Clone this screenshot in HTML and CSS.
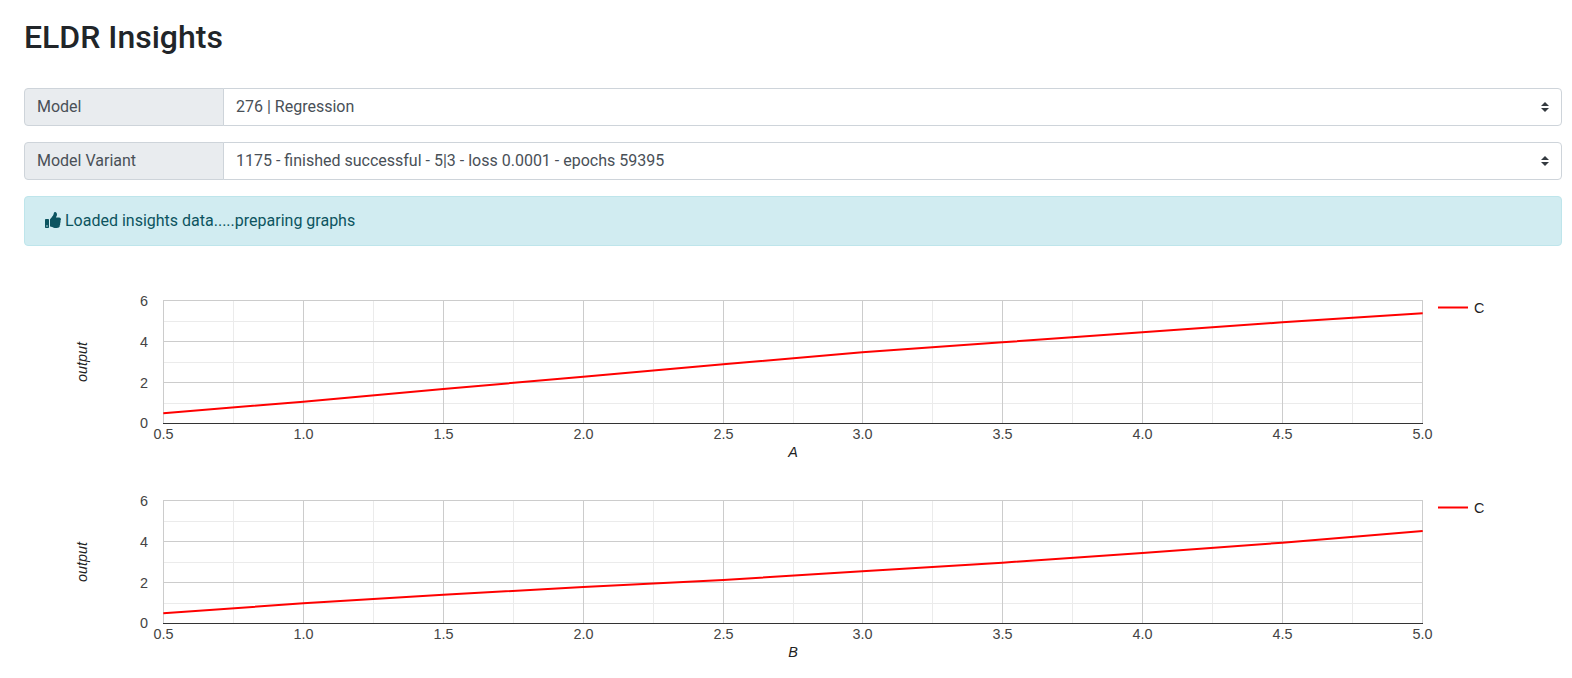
FILE: index.html
```html
<!DOCTYPE html>
<html lang="en">
<head>
    <meta charset="UTF-8">
    <title>ELDR Insights</title>
    <link rel="stylesheet" href="styles.css">
</head>
<body>
<div class="page">
    <h2 class="page-title">ELDR Insights</h2>

    <div class="input-group">
        <label class="input-label" for="model">Model</label>
        <select class="input-select" id="model">
            <option>276 | Regression</option>
        </select>
    </div>
    <div class="input-group">
        <label class="input-label" for="variant">Model Variant</label>
        <select class="input-select" id="variant">
            <option>1175 - finished successful - 5|3 - loss 0.0001 - epochs 59395</option>
        </select>
    </div>

    <div class="alert">
        <svg class="alert-icon" viewBox="0 0 512 512"><path d="M104 224H24c-13.255 0-24 10.745-24 24v240c0 13.255 10.745 24 24 24h80c13.255 0 24-10.745 24-24V248c0-13.255-10.745-24-24-24zM64 472c-13.255 0-24-10.745-24-24s10.745-24 24-24 24 10.745 24 24-10.745 24-24 24zM384 81.452c0 42.416-25.97 66.208-33.277 94.548h101.723c33.397 0 59.397 27.746 59.553 58.098.084 17.938-7.546 37.249-19.439 49.197l-.11.11c9.836 23.337 8.237 56.037-9.308 79.469 8.681 25.895-.069 57.704-16.382 74.757 4.298 17.598 2.244 32.575-6.148 44.632C440.202 511.587 389.616 512 346.839 512l-2.845-.001c-48.287-.017-87.806-17.598-119.56-31.725-15.957-7.099-36.821-15.887-52.651-16.178-6.54-.12-11.783-5.457-11.783-11.998v-213.77c0-3.2 1.282-6.271 3.558-8.521 39.614-39.144 56.648-80.587 89.117-113.111 14.804-14.832 20.188-37.236 25.393-58.902C282.515 39.293 291.817 0 312 0c24 0 72 8 72 81.452z"/></svg>
        Loaded insights data.....preparing graphs
    </div>

    <div class="charts">
        <svg class="chart" viewBox="0 0 1538 190">
            <path class="grid-minor" d="M209.5 20V143M349.5 20V143M489.5 20V143M629.5 20V143M769.5 20V143M908.5 20V143M1048.5 20V143M1188.5 20V143M1328.5 20V143M139 41.5H1399M139 82.5H1399M139 123.5H1399"/>
            <path class="grid-major" d="M139.5 20V143M279.5 20V143M419.5 20V143M559.5 20V143M699.5 20V143M838.5 20V143M978.5 20V143M1118.5 20V143M1258.5 20V143M1398.5 20V143M139 20.5H1399M139 61.5H1399M139 102.5H1399"/>
            <path class="baseline" d="M139 143.5H1399"/>
            <polyline class="series" points="139.3,133.3 279.3,121.7 419.3,109 559.3,96.7 699.3,84.3 838.3,72.3 978.3,62.3 1118.3,52.3 1258.3,42.3 1398.7,33.3"/>
            <g class="tick-y">
                <text x="124" y="26">6</text>
                <text x="124" y="67">4</text>
                <text x="124" y="108">2</text>
                <text x="124" y="148">0</text>
            </g>
            <g class="tick-x">
                <text x="139.5" y="159">0.5</text>
                <text x="279.5" y="159">1.0</text>
                <text x="419.5" y="159">1.5</text>
                <text x="559.5" y="159">2.0</text>
                <text x="699.5" y="159">2.5</text>
                <text x="838.5" y="159">3.0</text>
                <text x="978.5" y="159">3.5</text>
                <text x="1118.5" y="159">4.0</text>
                <text x="1258.5" y="159">4.5</text>
                <text x="1398.5" y="159">5.0</text>
            </g>
            <text class="axis-title" x="769" y="177">A</text>
            <text class="axis-title" transform="translate(62.5 82) rotate(-90)">output</text>
            <path class="series" d="M1414 27.5H1444"/>
            <text class="legend" x="1450" y="33">C</text>
        </svg>
        <svg class="chart" viewBox="0 0 1538 190">
            <path class="grid-minor" d="M209.5 20V143M349.5 20V143M489.5 20V143M629.5 20V143M769.5 20V143M908.5 20V143M1048.5 20V143M1188.5 20V143M1328.5 20V143M139 41.5H1399M139 82.5H1399M139 123.5H1399"/>
            <path class="grid-major" d="M139.5 20V143M279.5 20V143M419.5 20V143M559.5 20V143M699.5 20V143M838.5 20V143M978.5 20V143M1118.5 20V143M1258.5 20V143M1398.5 20V143M139 20.5H1399M139 61.5H1399M139 102.5H1399"/>
            <path class="baseline" d="M139 143.5H1399"/>
            <polyline class="series" points="139.3,133.3 279.3,123.3 419.3,114.7 559.3,107 699.3,100 838.3,91.3 978.3,82.7 1118.3,73 1258.3,62.7 1398.7,51"/>
            <g class="tick-y">
                <text x="124" y="26">6</text>
                <text x="124" y="67">4</text>
                <text x="124" y="108">2</text>
                <text x="124" y="148">0</text>
            </g>
            <g class="tick-x">
                <text x="139.5" y="159">0.5</text>
                <text x="279.5" y="159">1.0</text>
                <text x="419.5" y="159">1.5</text>
                <text x="559.5" y="159">2.0</text>
                <text x="699.5" y="159">2.5</text>
                <text x="838.5" y="159">3.0</text>
                <text x="978.5" y="159">3.5</text>
                <text x="1118.5" y="159">4.0</text>
                <text x="1258.5" y="159">4.5</text>
                <text x="1398.5" y="159">5.0</text>
            </g>
            <text class="axis-title" x="769" y="177">B</text>
            <text class="axis-title" transform="translate(62.5 82) rotate(-90)">output</text>
            <path class="series" d="M1414 27.5H1444"/>
            <text class="legend" x="1450" y="33">C</text>
        </svg>
    </div>
</div>
</body>
</html>
```

FILE: styles.css
```css
body {
    background-color: #fff;
    color: #212529;
    font-family: Roboto, "Liberation Sans", sans-serif;
    font-size: 16px;
    line-height: 1.5;
    margin: 0;
}
.page {
    padding: 18px 10px 0 24px;
}
.page-title {
    font-size: 32px;
    font-weight: 500;
    line-height: 38px;
    margin: 0 0 32px;
}
.input-group {
    display: flex;
    height: 38px;
    margin-bottom: 16px;
}
.input-label {
    flex: 0 0 200px;
    box-sizing: border-box;
    padding: 6px 12px;
    color: #495057;
    background-color: #e9ecef;
    border: 1px solid #ced4da;
    border-radius: 4px 0 0 4px;
}
.input-select {
    flex: 1;
    min-width: 0;
    margin-left: -1px;
    padding: 6px 28px 6px 12px;
    color: #495057;
    font: inherit;
    background: #fff url("data:image/svg+xml,%3csvg xmlns='http://www.w3.org/2000/svg' viewBox='0 0 4 5'%3e%3cpath fill='%23343a40' d='M2 0L0 2h4zm0 5L0 3h4z'/%3e%3c/svg%3e") no-repeat right 12px center / 8px 10px;
    border: 1px solid #ced4da;
    border-radius: 0 4px 4px 0;
    appearance: none;
}
.alert {
    padding: 12px 20px;
    color: #0c5460;
    background-color: #d1ecf1;
    border: 1px solid #bee5eb;
    border-radius: 4px;
}
.alert-icon {
    width: 16px;
    height: 16px;
    vertical-align: -2px;
    fill: currentColor;
}
.charts {
    padding-top: 34px;
}
.chart {
    display: block;
    width: 1538px;
    height: 190px;
    font-family: "Liberation Sans", Arial, sans-serif;
    font-size: 14.4px;
}
.chart + .chart {
    margin-top: 10px;
}
.grid-minor {
    fill: none;
    stroke: #ebebeb;
}
.grid-major {
    fill: none;
    stroke: #ccc;
}
.baseline {
    fill: none;
    stroke: #333;
}
.series {
    fill: none;
    stroke: #f00;
    stroke-width: 2;
}
.tick-y text {
    fill: #444;
    text-anchor: end;
}
.tick-x text {
    fill: #444;
    text-anchor: middle;
}
.axis-title {
    fill: #222;
    font-style: italic;
    text-anchor: middle;
}
.legend {
    fill: #222;
}
```
